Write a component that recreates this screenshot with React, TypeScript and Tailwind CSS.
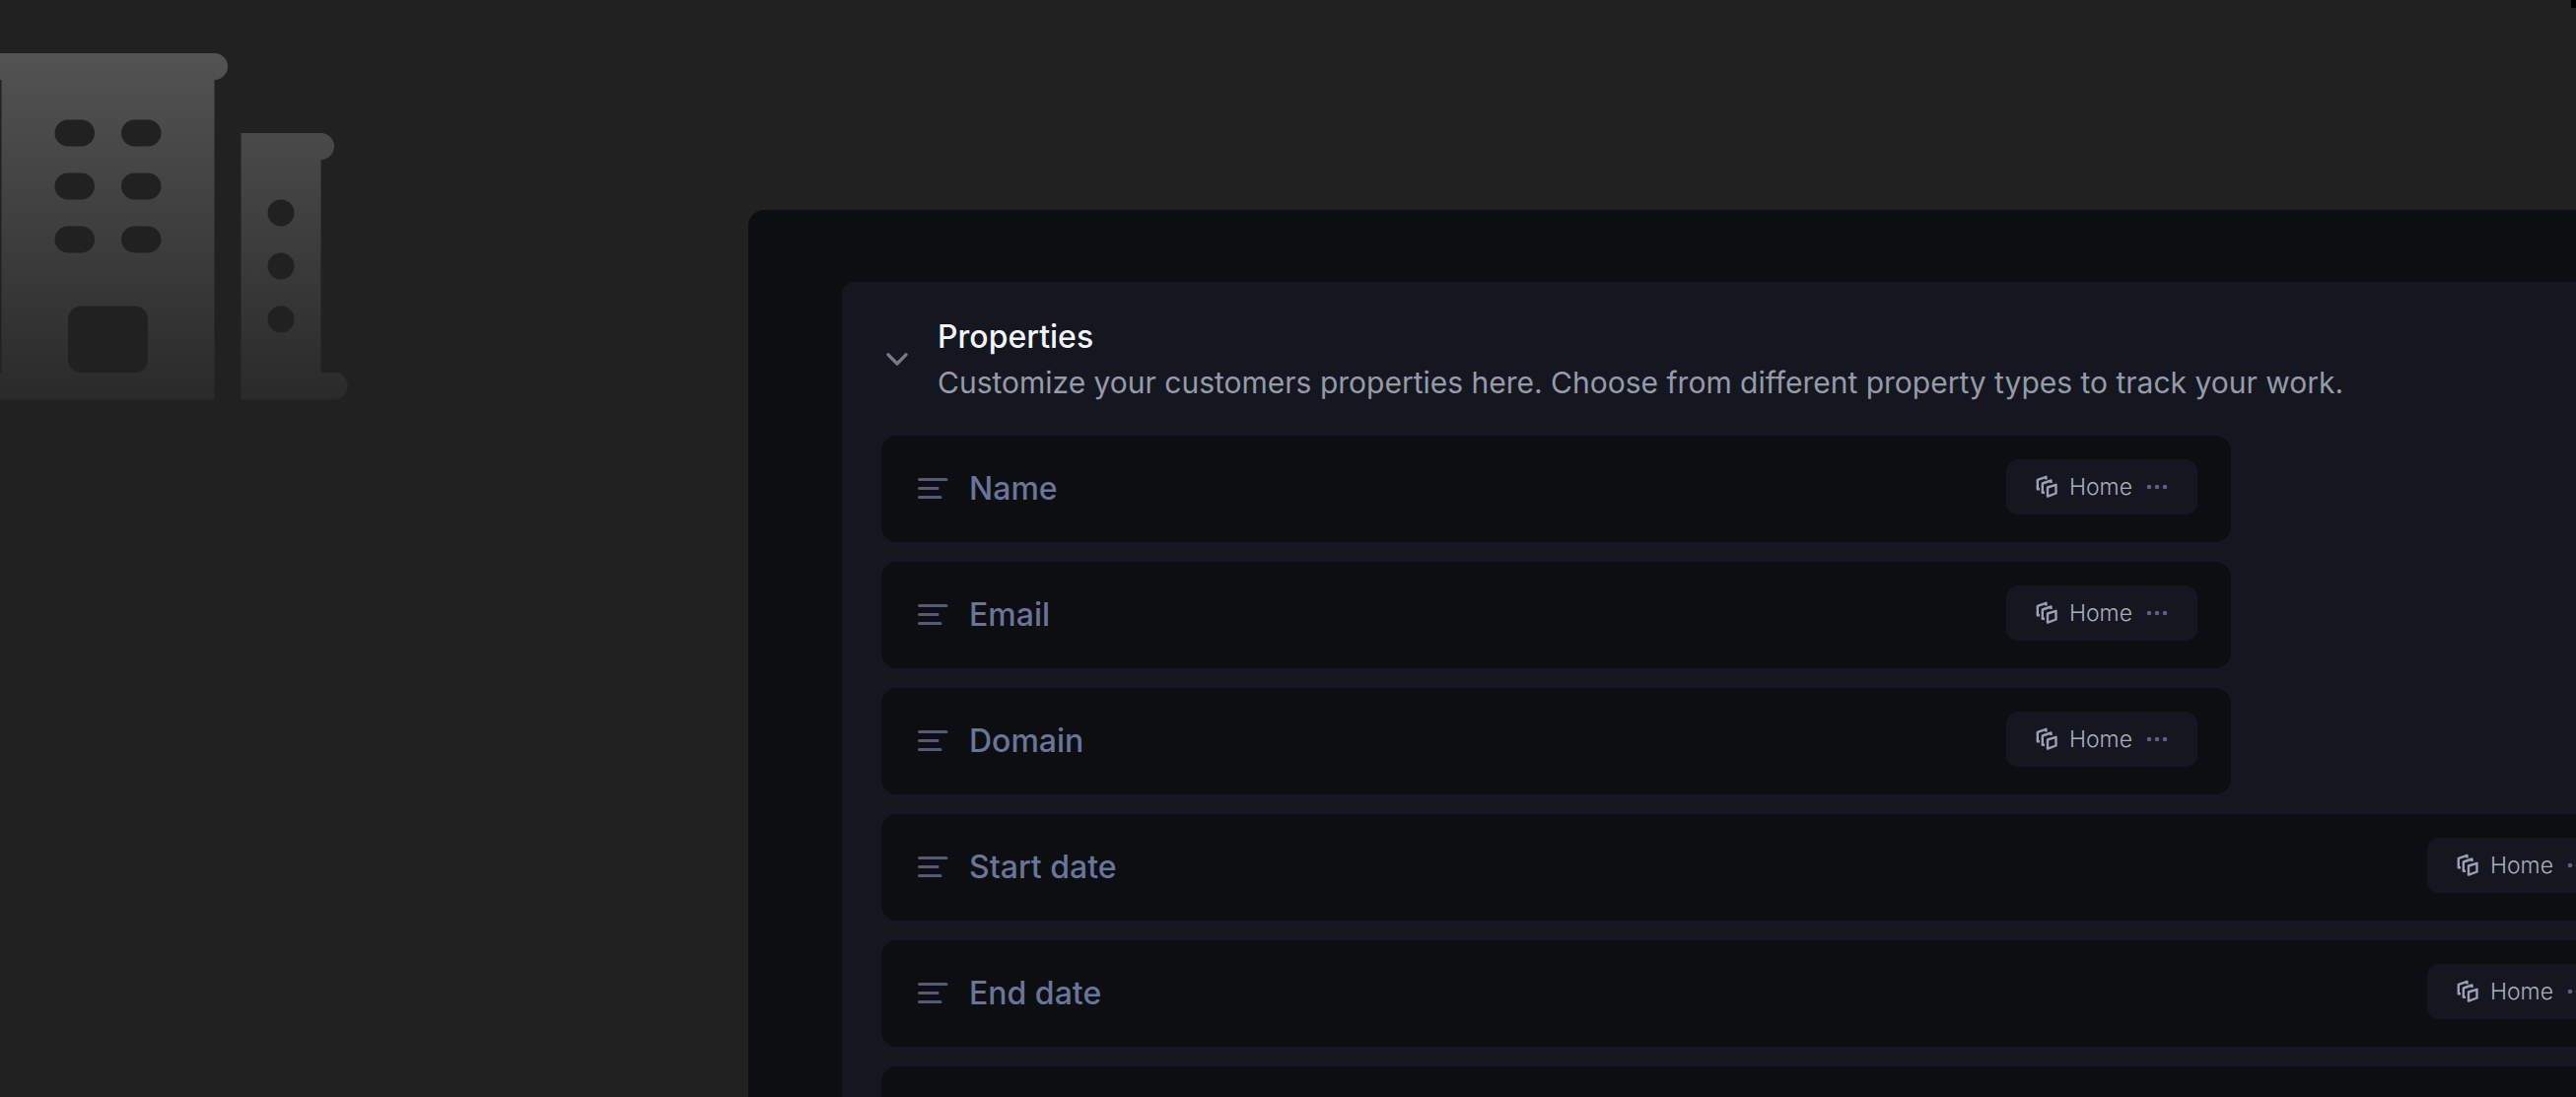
const rows = [
  { name: 'Name', wide: false },
  { name: 'Email', wide: false },
  { name: 'Domain', wide: false },
  { name: 'Start date', wide: true },
  { name: 'End date', wide: true },
];

function Buildings() {
  return (
    <svg width="353" height="352" viewBox="0 0 353 352" aria-hidden="true">
      <defs>
        <linearGradient id="fade" x1="0" y1="0" x2="0" y2="352" gradientUnits="userSpaceOnUse">
          <stop offset="0" stopColor="#535353" />
          <stop offset="1" stopColor="#2a2a2a" />
        </linearGradient>
      </defs>
      <path
        fill="url(#fade)"
        d="M0 0H217.500a13.500 13.500 0 0 1 0 27V351.500H0V324H1.500V27H0ZM244.500 81H325.500a13.500 13.500 0 0 1 0 27V324H339a13.500 13.500 0 0 1 0 27.500H244.500Z"
      />
      <g fill="#212121">
        {[67.5, 121.5, 175.5].map((y) => (
          <g key={y}>
            <rect x="55.500" y={y} width="40.500" height="27" rx="13.500" />
            <rect x="123" y={y} width="40.500" height="27" rx="13.500" />
            <circle cx="285" cy={y + 94.5} r="13.500" />
          </g>
        ))}
        <rect x="69" y="256.500" width="81" height="67.500" rx="13.500" />
      </g>
    </svg>
  );
}

function LinesIcon() {
  return (
    <svg width="32" height="24" viewBox="0 0 32 24" fill="none" stroke="#545a78" strokeWidth="3" strokeLinecap="round" aria-hidden="true">
      <path d="M2.500 2.500H30M2.500 11.500H21M2.500 20.500H24" />
    </svg>
  );
}

function StackIcon() {
  return (
    <svg width="22" height="24" viewBox="0 0 22 24" fill="none" stroke="#9da0b0" strokeWidth="2.400" strokeLinejoin="round" aria-hidden="true">
      <path d="M12 12.500L20.500 9.800V18.500L12 21.700Z" />
      <path d="M9 17.800H6.800V8.500L15.500 5.500V8" />
      <path d="M4 14.200H1.800V4.800L10.500 1.800V4.500" />
    </svg>
  );
}

function Row({ name, wide }: { name: string; wide: boolean }) {
  return (
    <li
      className={
        'flex h-27 items-start justify-between rounded-2xl bg-[#0c0e12] pt-6 pr-[34px] pl-9 ' +
        (wide ? '-mr-[77px]' : 'mr-[350px]')
      }
    >
      <div className="flex h-15 items-center gap-[21px]">
        <LinesIcon />
        <span className="text-[32px] leading-10 font-medium text-[#6b7599]">{name}</span>
      </div>
      <button type="button" className="flex h-14 items-center rounded-xl bg-[#141720] pr-7 pl-[30px]">
        <StackIcon />
        <span className="ml-3 text-[23px] leading-8 font-light text-[#aaadbc]">Home</span>
        <svg className="ml-3.5" width="24" height="6" viewBox="0 0 24 6" fill="#5f627a" aria-hidden="true">
          <circle cx="3" cy="3" r="2.300" />
          <circle cx="11" cy="3" r="2.300" />
          <circle cx="19" cy="3" r="2.300" />
        </svg>
      </button>
    </li>
  );
}

export default function App() {
  return (
    <div className="relative flex h-screen overflow-hidden bg-[#212121] font-['Inter',sans-serif]">
      <div className="w-[759px] shrink-0 pt-[54px]">
        <Buildings />
      </div>
      <main className="mt-[213px] min-w-0 flex-1 rounded-tl-2xl bg-[#0c0e12] pt-[73px] pl-[95px]">
        <section className="h-full rounded-tl-xl bg-[#141720] pt-[33px] pl-10">
          <header className="mb-[31px] flex items-center">
            <button type="button" aria-label="Collapse properties" className="mr-[25px] flex w-8 justify-center">
              <svg width="24" height="14" viewBox="0 0 24 14" fill="none" stroke="#777a84" strokeWidth="3.300" strokeLinecap="round" strokeLinejoin="round" aria-hidden="true">
                <path d="M3 1.800L12 11L21 1.800" />
              </svg>
            </button>
            <div>
              <h1 className="text-[32px] leading-[46px] font-medium text-[#f4f5fa]">Properties</h1>
              <p className="text-[30px] leading-[46px] whitespace-nowrap text-[#979aa8]">
                Customize your customers properties here. Choose from different property types to track your work.
              </p>
            </div>
          </header>
          <ul className="flex flex-col gap-5">
            {rows.map((row) => (
              <Row key={row.name} {...row} />
            ))}
            <li className="-mr-[77px] h-27 rounded-2xl bg-[#0c0e12]" />
          </ul>
        </section>
      </main>
      <div className="absolute top-0 right-0 h-2 w-[5px] bg-black" />
    </div>
  );
}
